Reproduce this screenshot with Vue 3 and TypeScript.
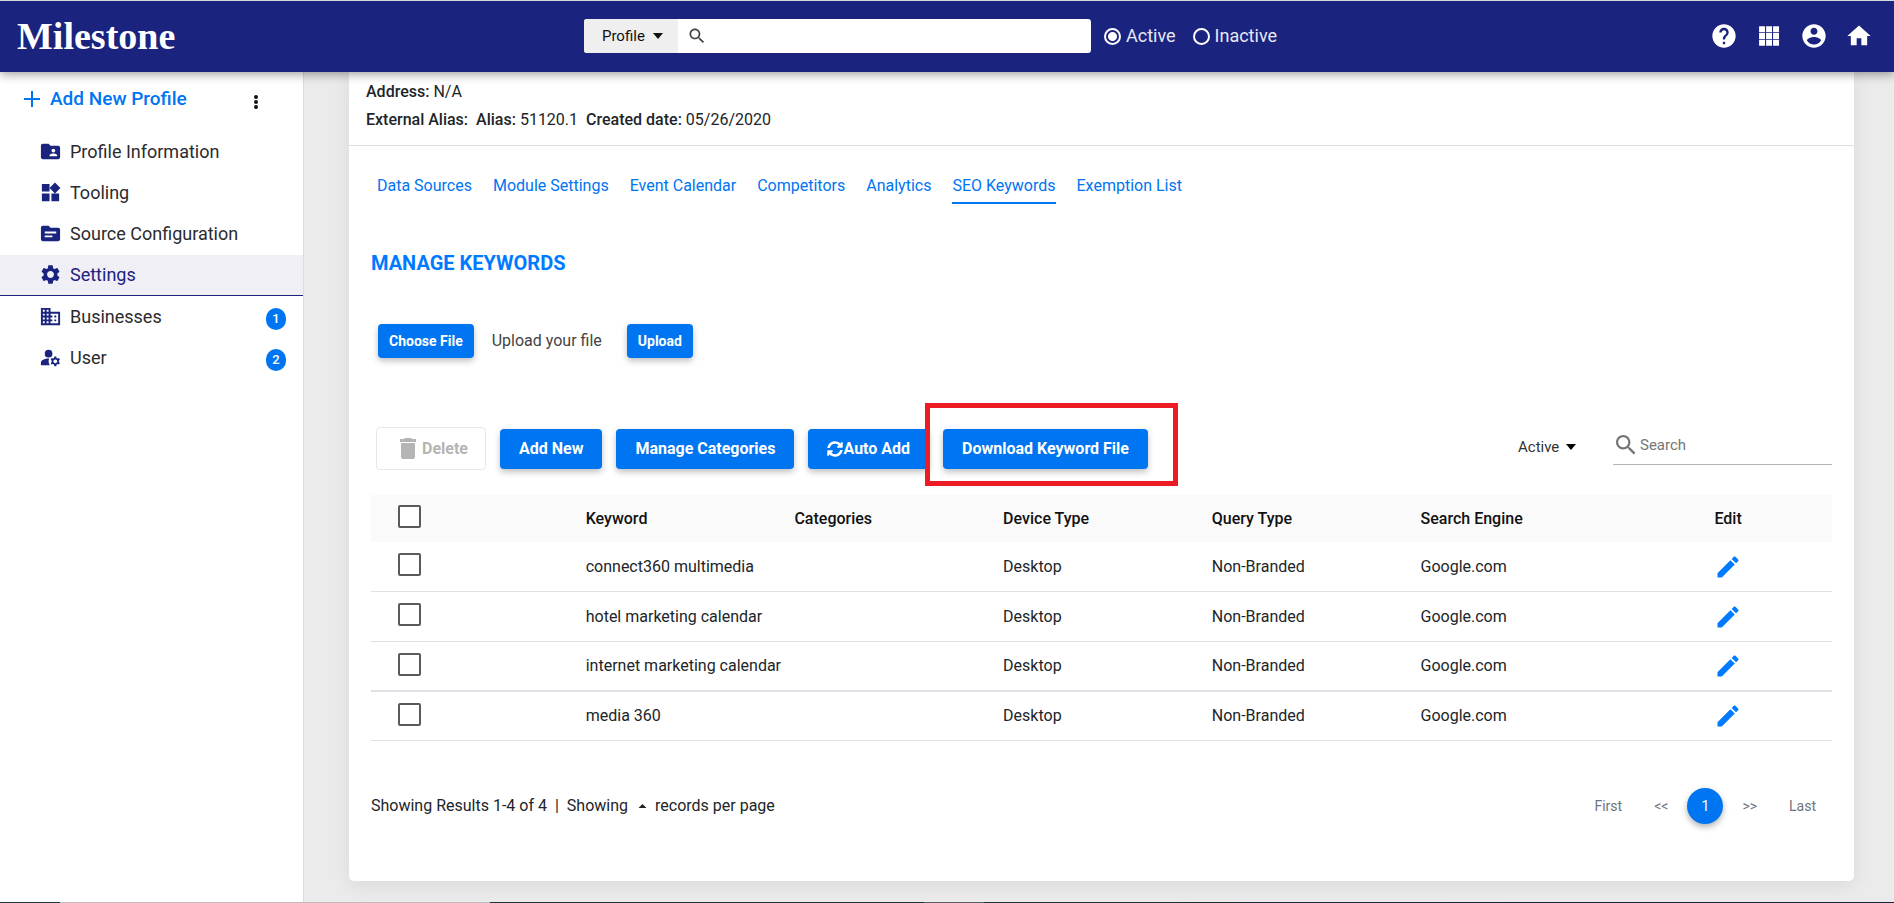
<script setup lang="ts">
import { ref } from 'vue'

interface NavItem {
  label: string
  icon: string
  badge?: number
  active?: boolean
}

interface KeywordRow {
  keyword: string
  categories: string
  device: string
  query: string
  engine: string
  selected: boolean
}

const navItems: NavItem[] = [
  {
    label: 'Profile Information',
    icon: 'M20 6h-8l-2-2H4c-1.1 0-1.99.9-1.99 2L2 18c0 1.1.9 2 2 2h16c1.1 0 2-.9 2-2V8c0-1.1-.9-2-2-2zm-5 3c1.1 0 2 .9 2 2s-.9 2-2 2-2-.9-2-2 .9-2 2-2zm4 8h-8v-1c0-1.33 2.67-2 4-2s4 .67 4 2v1z',
  },
  {
    label: 'Tooling',
    icon: 'M13 13v8h8v-8h-8zM3 21h8v-8H3v8zM3 3v8h8V3H3zm13.66-1.31L11 7.34 16.66 13l5.66-5.66-5.66-5.65z',
  },
  {
    label: 'Source Configuration',
    icon: 'M20 6h-8l-2-2H4c-1.1 0-1.99.9-1.99 2L2 18c0 1.1.9 2 2 2h16c1.1 0 2-.9 2-2V8c0-1.1-.9-2-2-2zm-6 10H6v-2h8v2zm4-4H6v-2h12v2z',
  },
  {
    label: 'Settings',
    active: true,
    icon: 'M19.14 12.94c.04-.3.06-.61.06-.94 0-.32-.02-.64-.07-.94l2.03-1.58c.18-.14.23-.41.12-.61l-1.92-3.32c-.12-.22-.37-.29-.59-.22l-2.39.96c-.5-.38-1.03-.7-1.62-.94l-.36-2.54c-.04-.24-.24-.41-.48-.41h-3.84c-.24 0-.43.17-.47.41l-.36 2.54c-.59.24-1.13.57-1.62.94l-2.39-.96c-.22-.08-.47 0-.59.22L2.74 8.87c-.12.21-.08.47.12.61l2.03 1.58c-.05.3-.09.63-.09.94s.02.64.07.94l-2.03 1.58c-.18.14-.23.41-.12.61l1.92 3.32c.12.22.37.29.59.22l2.39-.96c.5.38 1.03.7 1.62.94l.36 2.54c.05.24.24.41.48.41h3.84c.24 0 .44-.17.47-.41l.36-2.54c.59-.24 1.13-.56 1.62-.94l2.39.96c.22.08.47 0 .59-.22l1.92-3.32c.12-.22.07-.47-.12-.61l-2.01-1.58zM12 15.6c-1.98 0-3.6-1.62-3.6-3.6s1.62-3.6 3.6-3.6 3.6 1.62 3.6 3.6-1.62 3.6-3.6 3.6z',
  },
  {
    label: 'Businesses',
    badge: 1,
    icon: 'M12 7V3H2v18h20V7H12zM6 19H4v-2h2v2zm0-4H4v-2h2v2zm0-4H4V9h2v2zm0-4H4V5h2v2zm4 12H8v-2h2v2zm0-4H8v-2h2v2zm0-4H8V9h2v2zm0-4H8V5h2v2zm10 12h-8v-2h2v-2h-2v-2h2v-2h-2V9h8v10zm-2-8h-2v2h2v-2zm0 4h-2v2h2v-2z',
  },
  {
    label: 'User',
    badge: 2,
    icon: 'M10 4a4 4 0 1 0 0 8 4 4 0 0 0 0-8zM10.67 13.02C10.45 13.01 10.23 13 10 13c-2.42 0-4.68.67-6.61 1.82C2.51 15.34 2 16.32 2 17.35V20h9.26C10.47 18.87 10 17.49 10 16c0-1.07.25-2.07.67-2.98zM20.75 16c0-.22-.03-.42-.06-.63l1.14-1.01-1-1.73-1.45.49c-.32-.27-.68-.48-1.08-.63L18 11h-2l-.3 1.49c-.4.15-.76.36-1.08.63l-1.45-.49-1 1.73 1.14 1.01c-.03.21-.06.41-.06.63s.03.42.06.63l-1.14 1.01 1 1.73 1.45-.49c.32.27.68.48 1.08.63L16 21h2l.3-1.49c.4-.15.76-.36 1.08-.63l1.45.49 1-1.73-1.14-1.01c.03-.21.06-.41.06-.63zM17 18c-1.1 0-2-.9-2-2s.9-2 2-2 2 .9 2 2-.9 2-2 2z',
  },
]

const headerIcons = [
  {
    label: 'Help',
    path: 'M12 2C6.48 2 2 6.48 2 12s4.48 10 10 10 10-4.48 10-10S17.52 2 12 2zm1 17h-2v-2h2v2zm2.07-7.75l-.9.92C13.45 12.9 13 13.5 13 15h-2v-.5c0-1.1.45-2.1 1.17-2.83l1.24-1.26c.37-.36.59-.86.59-1.41 0-1.1-.9-2-2-2s-2 .9-2 2H8c0-2.21 1.79-4 4-4s4 1.79 4 4c0 .88-.36 1.68-.93 2.25z',
  },
  {
    label: 'Apps',
    path: 'M3.5 8.800h5.100V3.700H3.500v5.100zm6 11.500h5.100v-5.100H9.500v5.100zm-6 0h5.100v-5.100H3.500v5.100zm0-5.750h5.100v-5.100H3.500v5.100zm6 0h5.100v-5.100H9.500v5.100zM15.500 3.700v5.100h5.100V3.700h-5.100zM9.500 8.800h5.100V3.700H9.500v5.100zm6 5.750h5.100v-5.100h-5.100v5.100zm0 5.750h5.100v-5.100h-5.100v5.100z',
  },
  {
    label: 'Account',
    path: 'M12 2C6.48 2 2 6.48 2 12s4.48 10 10 10 10-4.48 10-10S17.52 2 12 2zm0 3c1.66 0 3 1.34 3 3s-1.34 3-3 3-3-1.34-3-3 1.34-3 3-3zm0 14.2c-2.5 0-4.71-1.28-6-3.22.03-1.99 4-3.08 6-3.08 1.99 0 5.97 1.09 6 3.08-1.29 1.94-3.5 3.22-6 3.22z',
  },
  { label: 'Home', path: 'M10 20v-6h4v6h5v-8h3L12 3 2 12h3v8z' },
]

const tabs = [
  'Data Sources',
  'Module Settings',
  'Event Calendar',
  'Competitors',
  'Analytics',
  'SEO Keywords',
  'Exemption List',
]
const activeTab = ref('SEO Keywords')

const columns = ['Keyword', 'Categories', 'Device Type', 'Query Type', 'Search Engine']

const makeRow = (keyword: string): KeywordRow => ({
  keyword,
  categories: '',
  device: 'Desktop',
  query: 'Non-Branded',
  engine: 'Google.com',
  selected: false,
})
const rows = ref<KeywordRow[]>([
  makeRow('connect360 multimedia'),
  makeRow('hotel marketing calendar'),
  makeRow('internet marketing calendar'),
  makeRow('media 360'),
])

const status = ref('active')
const allSelected = ref(false)
const toggleAll = () => rows.value.forEach((r) => (r.selected = allSelected.value))

const searchIcon =
  'M15.5 14h-.79l-.28-.27C15.41 12.59 16 11.11 16 9.5 16 5.91 13.09 3 9.5 3S3 5.91 3 9.5 5.91 16 9.5 16c1.61 0 3.09-.59 4.23-1.57l.27.28v.79l5 4.99L20.49 19l-4.99-5zm-6 0C7.01 14 5 11.99 5 9.5S7.01 5 9.5 5 14 7.01 14 9.5 11.99 14 9.5 14z'
</script>

<template>
  <div class="page">
    <header class="topbar">
      <a class="logo" href="#">Milestone</a>
      <div class="topbar-main">
        <div class="finder">
          <div class="select-wrap finder-type">
            <select aria-label="Search type">
              <option>Profile</option>
            </select>
            <svg class="caret" viewBox="0 0 10 6" aria-hidden="true"><path d="M0 0h10L5 6z" /></svg>
          </div>
          <label class="finder-field">
            <svg viewBox="0 0 24 24" aria-hidden="true"><path :d="searchIcon" /></svg>
            <input type="text" aria-label="Search profiles" />
          </label>
        </div>
        <label class="radio"><input v-model="status" type="radio" name="status" value="active" />Active</label>
        <label class="radio"><input v-model="status" type="radio" name="status" value="inactive" />Inactive</label>
        <nav class="topbar-icons">
          <button v-for="icon in headerIcons" :key="icon.label" type="button" :aria-label="icon.label">
            <svg viewBox="0 0 24 24"><path :d="icon.path" /></svg>
          </button>
        </nav>
      </div>
    </header>

    <div class="body">
      <aside class="sidebar">
        <div class="sidebar-head">
          <button type="button" class="add-profile">
            <svg viewBox="0 0 16 16" aria-hidden="true"><path d="M7 0h2v7h7v2H9v7H7V9H0V7h7z" /></svg>
            Add New Profile
          </button>
          <button type="button" class="more" aria-label="More options">
            <svg viewBox="0 0 4 14"><circle cx="2" cy="2" r="2" /><circle cx="2" cy="7" r="2" /><circle cx="2" cy="12" r="2" /></svg>
          </button>
        </div>
        <nav class="side-nav">
          <a v-for="item in navItems" :key="item.label" href="#" class="side-link" :class="{ active: item.active }">
            <svg viewBox="0 0 24 24" aria-hidden="true"><path :d="item.icon" /></svg>
            <span>{{ item.label }}</span>
            <span v-if="item.badge" class="badge">{{ item.badge }}</span>
          </a>
        </nav>
      </aside>

      <main class="content">
        <section class="card">
          <div class="profile-meta">
            <p><b>Address:</b> N/A</p>
            <p class="meta-row">
              <b>External Alias:</b>
              <span><b>Alias:</b> 51120.1</span>
              <span><b>Created date:</b> 05/26/2020</span>
            </p>
          </div>

          <nav class="tabs">
            <a
              v-for="tab in tabs"
              :key="tab"
              href="#"
              :class="{ current: tab === activeTab }"
              @click.prevent="activeTab = tab"
            >{{ tab }}</a>
          </nav>

          <div class="panel">
            <h1>MANAGE KEYWORDS</h1>

            <div class="upload">
              <button type="button" class="btn small">Choose File</button>
              <span>Upload your file</span>
              <button type="button" class="btn small">Upload</button>
            </div>

            <div class="toolbar">
              <button type="button" class="btn delete" disabled>
                <svg viewBox="0 0 16 21" aria-hidden="true"><path d="M1 5h14v14a2 2 0 0 1-2 2H3a2 2 0 0 1-2-2zM5 0h6l1 1h4v3H0V1h4z" /></svg>
                Delete
              </button>
              <button type="button" class="btn">Add New</button>
              <button type="button" class="btn">Manage Categories</button>
              <button type="button" class="btn">
                <svg class="sync" viewBox="0 0 512 512" aria-hidden="true">
                  <path d="M370.72 133.28C339.458 104.008 298.888 87.962 255.848 88c-77.458.068-144.328 53.178-162.791 126.85-1.344 5.363-6.122 9.15-11.651 9.15H24.103c-7.498 0-13.194-6.807-11.807-14.176C33.933 94.924 134.813 8 256 8c66.448 0 126.791 26.136 171.315 68.685L463.03 40.97C478.149 25.851 504 36.559 504 57.941V192c0 13.255-10.745 24-24 24H345.941c-21.382 0-32.09-25.851-16.971-40.971l41.75-41.749zM32 296h134.059c21.382 0 32.09 25.851 16.971 40.971l-41.75 41.75c31.262 29.273 71.835 45.319 114.876 45.28 77.418-.07 144.315-53.144 162.787-126.849 1.344-5.363 6.122-9.15 11.651-9.15h57.304c7.498 0 13.194 6.807 11.807 14.176C478.067 417.076 377.187 504 256 504c-66.448 0-126.791-26.136-171.315-68.685L48.97 471.03C33.851 486.149 8 475.441 8 454.059V320c0-13.255 10.745-24 24-24z" />
                </svg>Auto Add
              </button>
              <div class="highlighted">
                <button type="button" class="btn">Download Keyword File</button>
                <span class="highlight"></span>
              </div>

              <div class="filters">
                <div class="select-wrap status-filter">
                  <select aria-label="Keyword status">
                    <option>Active</option>
                  </select>
                  <svg class="caret" viewBox="0 0 10 6" aria-hidden="true"><path d="M0 0h10L5 6z" /></svg>
                </div>
                <label class="search">
                  <svg viewBox="3 3 18 18" aria-hidden="true"><path :d="searchIcon" /></svg>
                  <input type="text" placeholder="Search" aria-label="Search keywords" />
                </label>
              </div>
            </div>

            <table>
              <thead>
                <tr>
                  <th class="check">
                    <input v-model="allSelected" type="checkbox" aria-label="Select all" @change="toggleAll" />
                  </th>
                  <th v-for="column in columns" :key="column">{{ column }}</th>
                  <th class="edit">Edit</th>
                </tr>
              </thead>
              <tbody>
                <tr v-for="row in rows" :key="row.keyword">
                  <td class="check">
                    <input v-model="row.selected" type="checkbox" :aria-label="'Select ' + row.keyword" />
                  </td>
                  <td>{{ row.keyword }}</td>
                  <td>{{ row.categories }}</td>
                  <td>{{ row.device }}</td>
                  <td>{{ row.query }}</td>
                  <td>{{ row.engine }}</td>
                  <td class="edit">
                    <button type="button" :aria-label="'Edit ' + row.keyword">
                      <svg viewBox="0 0 24 24"><path d="M3 17.46V20.5c0 .28.22.5.5.5h3.04c.13 0 .26-.05.35-.15L17.81 9.94l-3.75-3.75L3.15 17.1c-.1.1-.15.22-.15.36zM20.71 7.04c.39-.39.39-1.02 0-1.41l-2.34-2.34c-.39-.39-1.02-.39-1.41 0l-1.83 1.83 3.75 3.75 1.83-1.83z" /></svg>
                    </button>
                  </td>
                </tr>
              </tbody>
            </table>

            <footer class="table-footer">
              <div class="summary">
                <span>Showing Results 1-4 of 4</span>
                <span>|</span>
                <span>Showing</span>
                <button type="button" aria-label="Records per page">
                  <svg viewBox="0 0 8 4"><path d="M0 4h8L4 0z" /></svg>
                </button>
                <span>records per page</span>
              </div>
              <nav class="pager">
                <button type="button">First</button>
                <button type="button">&lt;&lt;</button>
                <button type="button" class="current">1</button>
                <button type="button">&gt;&gt;</button>
                <button type="button">Last</button>
              </nav>
            </footer>
          </div>
        </section>
      </main>
    </div>
    <div class="baseline"></div>
  </div>
</template>

<style>
body {
  background: #ebebeb;
}
</style>

<style scoped>
* {
  box-sizing: border-box;
}

.page {
  display: flex;
  flex-direction: column;
  min-height: 100vh;
  color: #212529;
  font: 400 16px/20px Roboto, "Liberation Sans", sans-serif;
}

button,
input,
select {
  font: inherit;
  color: inherit;
}

button {
  border: 0;
  padding: 0;
  background: none;
  cursor: pointer;
}

a {
  text-decoration: none;
}

svg {
  display: block;
  flex: none;
  fill: currentColor;
}

.topbar {
  position: relative;
  z-index: 1;
  display: grid;
  grid-template-columns: 37fr 83fr;
  align-items: center;
  height: 72px;
  padding-bottom: 1px;
  border-top: 1px solid #d5d8e0;
  background: #1a237e;
  box-shadow: 0 2px 10px rgba(0, 0, 0, 0.4);
  color: #fff;
}

.logo {
  padding-left: 17px;
  color: #fff;
  font: 700 38px/48px "Liberation Serif", serif;
}

.topbar-main {
  display: flex;
  align-items: center;
}

.finder {
  display: flex;
  flex: 0 1 507px;
  height: 34px;
  margin-right: 13px;
  border-radius: 3px;
  overflow: hidden;
  background: #fff;
  color: #111;
  font-size: 15px;
}

.select-wrap {
  display: flex;
  align-items: center;
}

.select-wrap select {
  appearance: none;
  border: 0;
  padding: 0;
  background: none;
}

.caret {
  width: 10px;
  height: 6px;
}

.finder-type {
  width: 94px;
  gap: 8px;
  padding-left: 18px;
  background: #efefef;
}

.finder-field {
  display: flex;
  flex: 1;
  align-items: center;
  gap: 8px;
  padding-left: 9px;
}

.finder-field svg {
  width: 20px;
  height: 20px;
  color: #444;
}

.finder-field input {
  flex: 1;
  min-width: 0;
  border: 0;
  outline: 0;
}

.radio {
  display: flex;
  align-items: center;
  gap: 5px;
  margin-right: 17px;
  color: #e6e8f4;
  font-size: 18px;
}

.radio input {
  appearance: none;
  width: 17px;
  height: 17px;
  margin: 0;
  border: 2px solid #fff;
  border-radius: 50%;
}

.radio input:checked {
  background: radial-gradient(circle, #fff 4px, transparent 5px);
}

.topbar-icons {
  display: flex;
  gap: 17px;
  margin-left: auto;
  padding-right: 21px;
}

.topbar-icons svg {
  width: 28px;
  height: 28px;
}

.body {
  display: flex;
  flex: 1;
}

.sidebar {
  flex: 0 0 304px;
  border-right: 1px solid #dcdce0;
  background: #fff;
}

.sidebar-head {
  display: flex;
  align-items: center;
  justify-content: space-between;
  padding: 15px 45px 21px 24px;
}

.add-profile {
  display: flex;
  align-items: center;
  gap: 10px;
  color: #0075f2;
  font-weight: 500;
  font-size: 19px;
  line-height: 24px;
}

.add-profile svg {
  width: 16px;
  height: 16px;
}

.more {
  padding-top: 6px;
}

.more svg {
  width: 4px;
  height: 14px;
  color: #111;
}

.side-nav {
  display: flex;
  flex-direction: column;
}

.side-link {
  display: flex;
  align-items: center;
  height: 41px;
  padding: 0 17px 0 39px;
  border-bottom: 1px solid transparent;
  color: #2b2b2f;
  font-size: 18px;
}

.side-link svg {
  width: 23px;
  height: 23px;
  margin: 0 8px 2px 0;
  color: #1a237e;
}

.side-link.active {
  margin-bottom: 1px;
  border-color: #1a237e;
  background: #f0eff5;
  color: #1a237e;
}

.badge {
  width: 20px;
  height: 22px;
  margin: 4px 0 0 auto;
  border-radius: 10px;
  background: #0075f2;
  color: #fff;
  font-weight: 500;
  font-size: 13px;
  line-height: 22px;
  text-align: center;
}

.content {
  flex: 1;
  min-width: 0;
  padding: 0 40px 21px 45px;
  background: #ebebeb;
}

.card {
  height: 100%;
  border-radius: 0 0 5px 5px;
  background: #fff;
  box-shadow: 0 4px 20px rgba(0, 0, 0, 0.08);
}

.profile-meta {
  padding: 6px 17px 11px;
  border-bottom: 1px solid #dedede;
  line-height: 28px;
}

.profile-meta p {
  margin: 0;
}

.profile-meta b {
  font-weight: 500;
}

.meta-row {
  display: flex;
  gap: 8px;
}

.tabs {
  display: flex;
  gap: 21px;
  padding: 26px 28px 0;
}

.tabs a {
  padding: 4px 0 6px;
  border-bottom: 2px solid transparent;
  color: #0075f2;
}

.tabs a.current {
  border-color: #0075f2;
}

.panel {
  padding: 47px 22px 0;
}

h1 {
  margin: 0;
  color: #007bff;
  font-weight: 700;
  font-size: 20px;
  line-height: 24px;
}

.upload {
  display: flex;
  align-items: center;
  padding: 49px 7px 0;
  color: #444;
}

.upload span {
  padding: 0 25px 0 18px;
}

.btn {
  display: flex;
  align-items: center;
  justify-content: center;
  height: 40px;
  padding: 0 19px;
  border-radius: 4px;
  background: #0075f2;
  box-shadow: 0 3px 6px rgba(0, 0, 0, 0.25);
  color: #fff;
  font-weight: 700;
  white-space: nowrap;
}

.btn.small {
  height: 34px;
  padding: 0 11px;
  font-size: 14px;
}

.btn.delete {
  height: 43px;
  gap: 6px;
  padding: 0 17px 0 23px;
  border: 1px solid #e8e8e8;
  background: #fff;
  box-shadow: none;
  color: #b5b5b5;
}

.delete svg {
  width: 16px;
  height: 21px;
}

.sync {
  width: 16px;
  height: 16px;
}

.toolbar {
  display: flex;
  align-items: center;
  gap: 14px;
  padding: 68px 0 24px 5px;
}

.highlighted {
  position: relative;
}

.highlight {
  position: absolute;
  inset: -26px -30px -17px -18px;
  border: 5px solid #ed1c24;
  pointer-events: none;
}

.filters {
  display: flex;
  align-items: center;
  gap: 37px;
  margin-left: auto;
  font-size: 15px;
}

.status-filter {
  gap: 6px;
  padding-bottom: 3px;
  color: #333;
}

.status-filter .caret {
  color: #000;
}

.search {
  display: flex;
  align-items: center;
  gap: 4px;
  width: 219px;
  height: 39px;
  margin-bottom: 6px;
  padding-left: 3px;
  border-bottom: 1px solid #b5b5b5;
  color: #757575;
}

.search svg {
  width: 20px;
  height: 20px;
}

.search input {
  flex: 1;
  min-width: 0;
  border: 0;
  padding: 0;
  outline: 0;
  background: none;
}

.search input::placeholder {
  color: #757575;
}

table {
  width: 100%;
  border-collapse: separate;
  border-spacing: 0;
  table-layout: fixed;
}

th {
  height: 47px;
  padding: 0 5px 0 6px;
  background: #fafafa;
  color: #111;
  font-weight: 500;
  text-align: left;
}

td {
  height: 50px;
  padding: 0 5px 0 6px;
  border-bottom: 1px solid #dee2e6;
}

tbody tr:nth-child(3) td {
  border-bottom-width: 2px;
}

tbody tr:last-child td {
  height: 49px;
}

.check {
  padding: 0 27px 4px;
}

.check input {
  display: block;
  appearance: none;
  width: 23px;
  height: 23px;
  margin: 0;
  border: 2px solid #5a5a5a;
  border-radius: 2px;
  background: #fff;
}

.check input:checked {
  background: #0075f2;
}

.edit {
  text-align: center;
}

.edit button {
  display: block;
  margin: 0 auto;
  color: #007bff;
}

.edit svg {
  width: 28px;
  height: 28px;
}

.table-footer {
  display: flex;
  align-items: center;
  justify-content: space-between;
  padding: 47px 0 57px;
}

.summary {
  display: flex;
  align-items: center;
  gap: 8px;
}

.summary button {
  padding-left: 2px;
}

.summary svg {
  width: 9px;
  height: 4px;
}

.pager {
  display: flex;
  align-items: center;
  color: #6c757d;
  font-size: 14px;
}

.pager button {
  height: 36px;
  padding: 0 16px;
}

.pager .current {
  width: 36px;
  margin: 0 3px;
  padding: 0;
  border-radius: 18px;
  background: #0075f2;
  box-shadow: 0 3px 6px rgba(0, 0, 0, 0.3);
  color: #fff;
}

.baseline {
  height: 1px;
  background: linear-gradient(
    to right,
    #22353a 60px,
    #bcbcbc 60px,
    #bcbcbc 490px,
    #22353a 490px,
    #22353a 924px,
    #5a5f68 924px,
    #5a5f68 984px,
    #22353a 984px,
    #1a2340 1500px
  );
}
</style>
